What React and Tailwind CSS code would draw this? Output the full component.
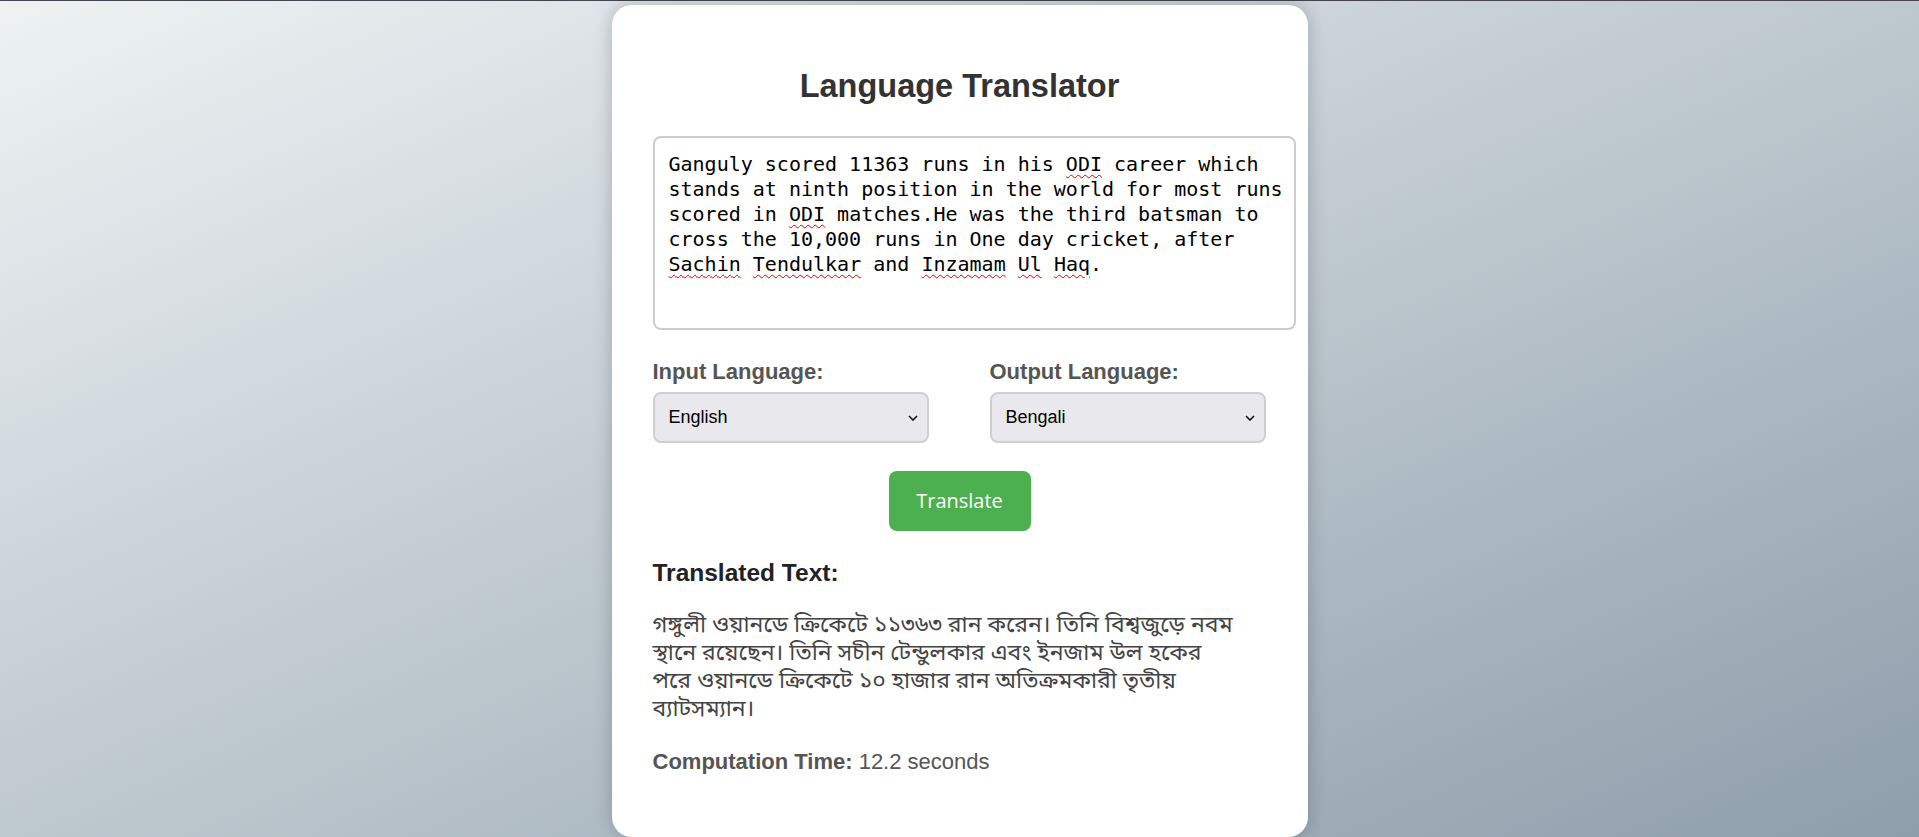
import React, { useState } from "react";

const languages = ["English", "Bengali", "Hindi", "French", "Spanish", "German"];

const Squiggle = ({ children }) => (
  <span className="underline decoration-wavy decoration-[#e00] decoration-[1px] underline-offset-[3px]">
    {children}
  </span>
);

const Chevron = () => (
  <svg
    width="10"
    height="6"
    viewBox="0 0 10 6"
    className="pointer-events-none absolute right-[11px] top-1/2 -translate-y-1/2"
  >
    <path d="M1 1l4 4 4-4" fill="none" stroke="#111" strokeWidth="1.6" />
  </svg>
);

const LangSelect = ({ label, value, onChange }) => (
  <div className="w-[276px]">
    <label className="block text-[22px] leading-[25px] font-bold text-[#555] mb-[8px]">
      {label}
    </label>
    <div className="relative">
      <select
        value={value}
        onChange={(e) => onChange(e.target.value)}
        className="appearance-none w-full h-[51px] pl-[14px] pr-[30px] rounded-[8px] border-2 border-[#cfcfd2] bg-[#e9e9ed] text-[18px] text-black font-['Liberation_Sans',Arial,sans-serif] outline-none"
      >
        {languages.map((l) => (
          <option key={l}>{l}</option>
        ))}
      </select>
      <Chevron />
    </div>
  </div>
);

export default function App() {
  const [inputLang, setInputLang] = useState("English");
  const [outputLang, setOutputLang] = useState("Bengali");

  return (
    <div className="min-h-screen border-t border-[#45454f] bg-[linear-gradient(to_bottom_right,#eef2f3,#8e9eab)] flex justify-center pt-[4px] font-['Liberation_Sans',Arial,sans-serif]">
      <div className="w-[696px] bg-white rounded-[20px] shadow-[0_0_18px_rgba(0,0,0,0.22)] px-[41px] pt-[40px] pb-[40px]">
        {/* Title */}
        <h1 className="mt-[23px] mb-[31px] text-center text-[32.5px] leading-[37px] font-bold text-[#333]">
          Language Translator
        </h1>

        {/* Input text */}
        <div
          role="textbox"
          className="w-[643px] h-[194px] border-2 border-[#cdcdcd] rounded-[8px] pl-[14px] pr-[9px] pt-[14px] text-[20px] leading-[25px] text-black font-['DejaVu_Sans_Mono','Liberation_Mono',monospace] bg-white"
        >
          Ganguly scored 11363 runs in his <Squiggle>ODI</Squiggle> career which
          stands at ninth position in the world for most runs scored in{" "}
          <Squiggle>ODI</Squiggle> matches.He was the third batsman to cross the
          10,000 runs in One day cricket, after <Squiggle>Sachin</Squiggle>{" "}
          <Squiggle>Tendulkar</Squiggle> and <Squiggle>Inzamam</Squiggle>{" "}
          <Squiggle>Ul</Squiggle> <Squiggle>Haq</Squiggle>.
        </div>

        {/* Languages */}
        <div className="flex gap-[61px] mt-[29px]">
          <LangSelect label="Input Language:" value={inputLang} onChange={setInputLang} />
          <LangSelect label="Output Language:" value={outputLang} onChange={setOutputLang} />
        </div>

        <div className="flex justify-center mt-[28px]">
          <button className="w-[142px] h-[60px] rounded-[8px] bg-[#4caf50] text-white text-[20px] font-['Open_Sans',sans-serif]">
            Translate
          </button>
        </div>

        {/* Result */}
        <h3 className="mt-[28px] text-[24.5px] leading-[27.6px] font-bold text-[#222]">
          Translated Text:
        </h3>
        <div className="mt-[25px] text-[23px] leading-[28px] text-[#444] font-['Noto_Sans_Bengali','Noto_Serif_Bengali','Lohit_Bengali','Noto_Sans',sans-serif]">
          <div className="whitespace-nowrap">গঙ্গুলী ওয়ানডে ক্রিকেটে ১১৩৬৩ রান করেন। তিনি বিশ্বজুড়ে নবম</div>
          <div className="whitespace-nowrap">স্থানে রয়েছেন। তিনি সচীন টেন্ডুলকার এবং ইনজাম উল হকের</div>
          <div className="whitespace-nowrap">পরে ওয়ানডে ক্রিকেটে ১০ হাজার রান অতিক্রমকারী তৃতীয়</div>
          <div className="whitespace-nowrap">ব্যাটসম্যান।</div>
        </div>

        <p className="mt-[25px] text-[22px] leading-[25px] text-[#555]">
          <span className="font-bold">Computation Time:</span> 12.2 seconds
        </p>
        <div className="h-[22px]" />
      </div>
    </div>
  );
}
